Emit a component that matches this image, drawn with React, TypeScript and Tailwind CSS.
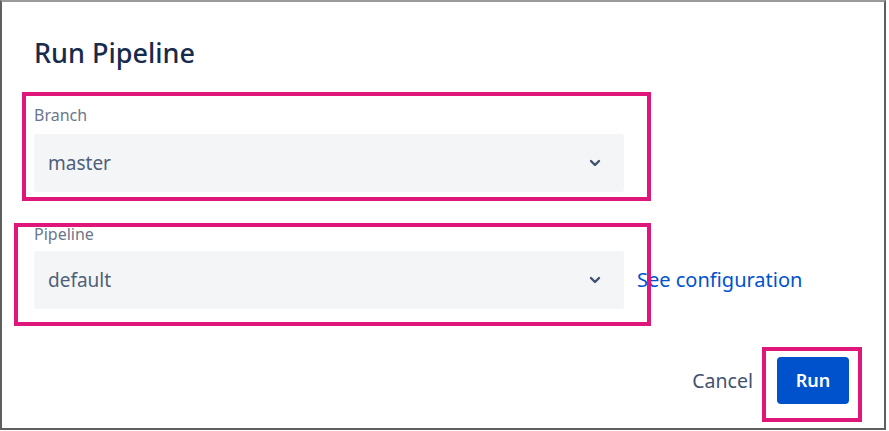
import React from 'react'

const font = { fontFamily: '"Noto Sans", "Open Sans", Arial, sans-serif' }

function Chevron() {
  return (
    <svg width="12" height="8" viewBox="0 0 12 8" className="shrink-0">
      <path d="M2 2l4 4 4-4" fill="none" stroke="#42526e" strokeWidth="2.4" strokeLinecap="round" strokeLinejoin="round" />
    </svg>
  )
}

function Select({ value }: { value: string }) {
  return (
    <div className="w-[590px] h-[58px] rounded-[3px] bg-[#f4f5f7] flex items-center justify-between pl-[14px] pr-[23px]">
      <span className="text-[19px] text-[#505f79]">{value}</span>
      <Chevron />
    </div>
  )
}

export default function App() {
  return (
    <div className="bg-white w-[889px] h-[431px]" style={font}>
      <div className="relative w-[886px] h-[430px] border-2 border-[#5f5f5f] border-t-[#9a9a9a] bg-white">
        <div className="flex flex-col pl-[32px] pt-[34px] pr-[35px]">
          <h1 className="text-[27px] leading-[34px] font-medium text-[#172b4d]">Run Pipeline</h1>

          <label className="mt-[35px] text-[16px] leading-[20px] text-[#6b778c]">Branch</label>
          <div className="mt-[9px]">
            <Select value="master" />
          </div>

          <label className="mt-[32px] text-[16px] leading-[20px] text-[#6b778c]">Pipeline</label>
          <div className="mt-[7px] flex items-center gap-[13px]">
            <Select value="default" />
            <a className="text-[20px] text-[#0052cc]">See configuration</a>
          </div>

          <div className="mt-[48px] flex items-center justify-end gap-[24px]">
            <button className="text-[19.5px] text-[#42526e]">Cancel</button>
            <button className="w-[72px] h-[47px] rounded-[4px] bg-[#0052cc] text-white text-[18px] font-semibold">Run</button>
          </div>
        </div>

        {/* annotation boxes */}
        <div className="absolute left-[20px] top-[90px] w-[629px] h-[109px] border-[4px] border-[#e0177a]" />
        <div className="absolute left-[12px] top-[221px] w-[637px] h-[103px] border-[4px] border-[#e0177a]" />
        <div className="absolute left-[760px] top-[345px] w-[100px] h-[75px] border-[4px] border-[#e0177a]" />
      </div>
    </div>
  )
}
